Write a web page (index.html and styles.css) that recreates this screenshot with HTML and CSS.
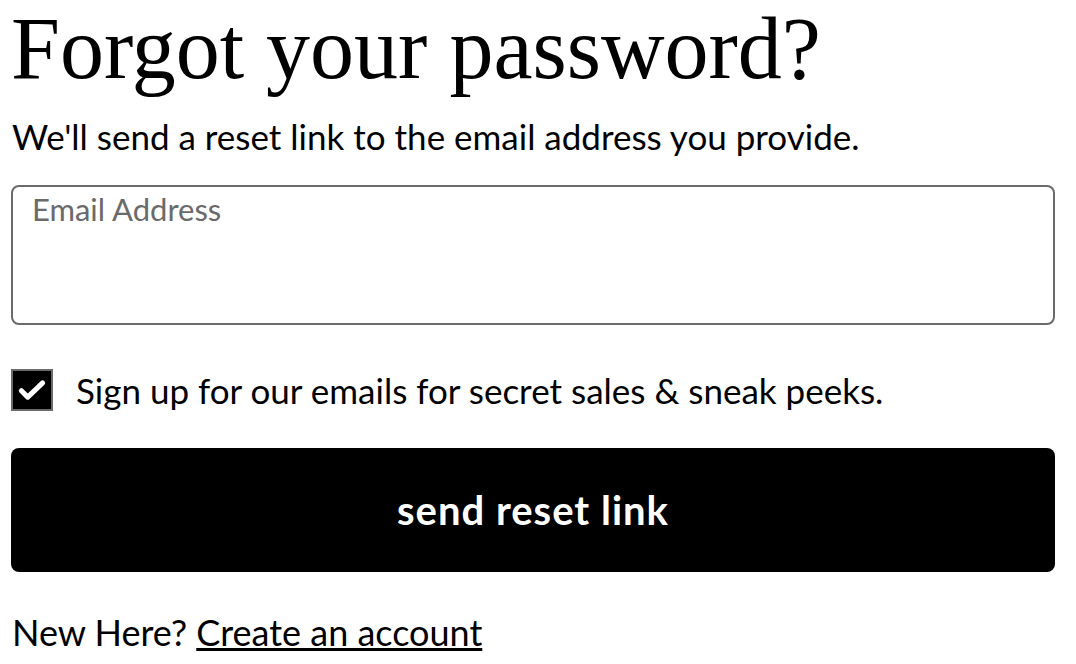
FILE: index.html
```html
<!DOCTYPE html>
<html>
<head>
<meta charset="utf-8">
<title>Forgot your password?</title>
<link rel="stylesheet" href="styles.css">
</head>
<body>
<div class="page">
  <h1 class="title">Forgot your password?</h1>
  <p class="intro">We'll send a reset link to the email address you provide.</p>
  <form class="reset-form">
    <label class="field">
      <input class="field-input" type="email" placeholder="Email Address">
    </label>
    <label class="optin">
      <span class="optin-box">
        <svg viewBox="0 0 24 24" width="34" height="34"><path d="M4.5 12.5l4.5 4.5L19.5 7" fill="none" stroke="#fff" stroke-width="3.6" stroke-linecap="round" stroke-linejoin="round"/></svg>
      </span>
      <span class="optin-text">Sign up for our emails for secret sales &amp; sneak peeks.</span>
    </label>
    <button class="submit" type="button">send reset link</button>
  </form>
  <p class="signup">New Here? <a href="#" class="signup-link">Create an account</a></p>
</div>
</body>
</html>
```
FILE: styles.css
```css
body {
    margin: 0;
    background: #fff;
    color: #000;
    font-family: "Lato", "Noto Sans", sans-serif;
}

.page {
    width: 1044px;
    margin-left: 11px;
}

.title {
    margin: 0;
    font-family: "Liberation Serif", serif;
    font-weight: normal;
    font-size: 88px;
    line-height: 98px;
}

.intro {
    margin: 18px 0 0 1px;
    font-size: 35px;
    line-height: 40px;
}

.reset-form {
    margin-top: 29px;
}

.field {
    display: block;
}

.field-input {
    box-sizing: border-box;
    display: block;
    width: 100%;
    height: 140px;
    margin: 0;
    border: 2px solid #6b6b6b;
    border-radius: 8px;
    padding: 0 19px 92px;
    font-family: inherit;
    font-size: 31px;
    color: #000;
}
.field-input::placeholder {
    color: #6a6a6a;
}

.optin {
    display: flex;
    align-items: center;
    gap: 23px;
    margin-top: 44px;
}

.optin-box {
    box-sizing: border-box;
    width: 42px;
    height: 42px;
    background: #000;
    border: 2px solid #6b6b6b;
    display: flex;
    align-items: center;
    justify-content: center;
}

.optin-text {
    font-size: 35px;
    line-height: 42px;
}

.submit {
    display: block;
    width: 100%;
    height: 124px;
    margin-top: 37px;
    border: 0;
    border-radius: 8px;
    background: #000;
    color: #fff;
    font-family: inherit;
    font-size: 40px;
    font-weight: bold;
    letter-spacing: 1px;
}

.signup {
    margin: 40px 0 0 1px;
    font-size: 36px;
    line-height: 40px;
}

.signup-link {
    color: #000;
}
```
